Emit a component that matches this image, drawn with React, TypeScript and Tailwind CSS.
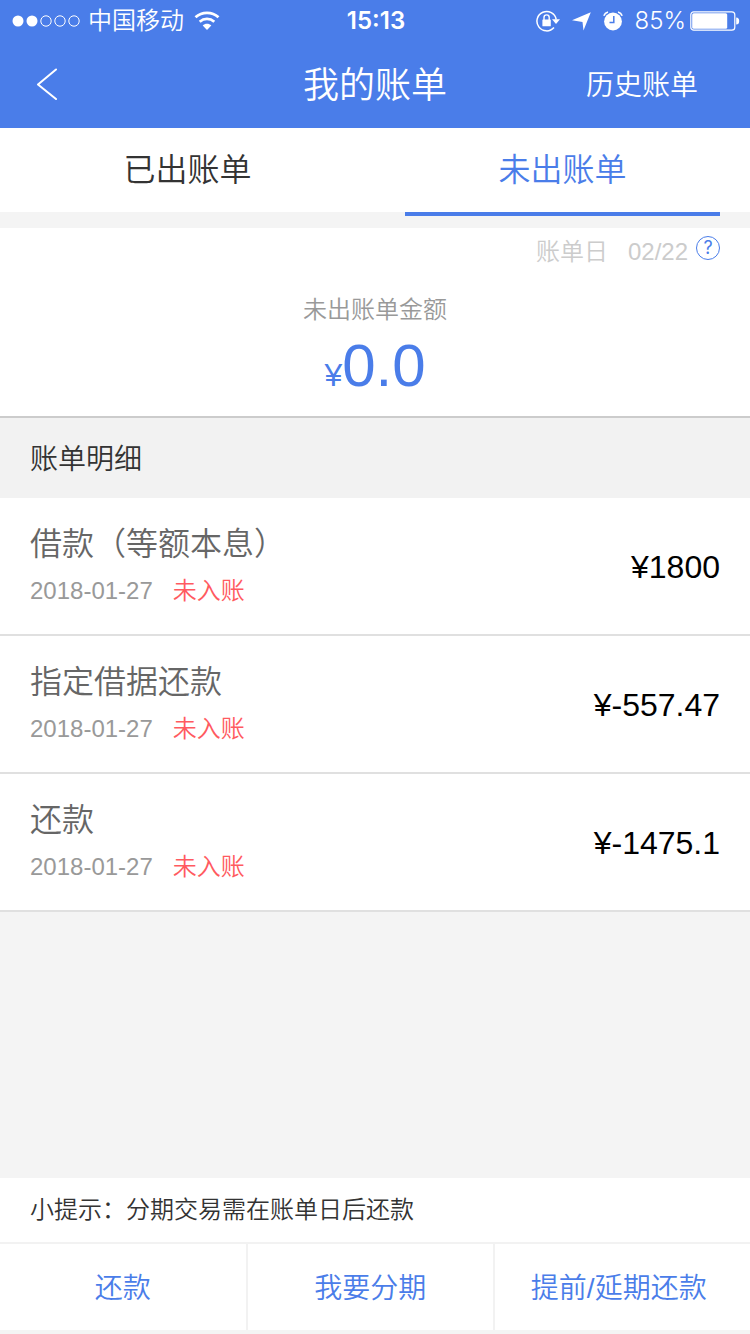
import React, { useState } from 'react';

type Bill = { id: number; title: string; date: string; status: string; amount: string };

const bills: Bill[] = [
  { id: 1, title: '借款（等额本息）', date: '2018-01-27', status: '未入账', amount: '1800' },
  { id: 2, title: '指定借据还款', date: '2018-01-27', status: '未入账', amount: '-557.47' },
  { id: 3, title: '还款', date: '2018-01-27', status: '未入账', amount: '-1475.1' },
];

const tabs = ['已出账单', '未出账单'];
const actions = ['还款', '我要分期', '提前/延期还款'];

function StatusBar() {
  return (
    <div className="flex h-10 items-center pt-0.5 pr-2.5 pl-3 text-2xl leading-9">
      <div className="flex flex-1 items-center">
        <svg width="68" height="12" viewBox="0 0 68 12" className="mr-2" aria-hidden="true">
          <circle cx="6" cy="6" r="5.5" fill="#fff" />
          <circle cx="20" cy="6" r="5.5" fill="#fff" />
          <g fill="none" stroke="#fff">
            <circle cx="34" cy="6" r="5.2" />
            <circle cx="48" cy="6" r="5.2" />
            <circle cx="62" cy="6" r="5.2" />
          </g>
        </svg>
        <span>中国移动</span>
        <svg width="26" height="20" viewBox="0 0 26 20" className="ml-2.5" aria-hidden="true">
          <g fill="none" stroke="#fff" strokeWidth="2.8">
            <path d="M1.5 6.3C8 .4 18 .4 24.5 6.3" />
            <path d="M5.7 10.7C10 7 16 7 20.3 10.7" />
          </g>
          <path d="M13 19 8.700 14.500C11 12.300 15 12.300 17.300 14.500Z" fill="#fff" />
        </svg>
      </div>
      <span className="font-['Inter',sans-serif] font-semibold">15:13</span>
      <div className="flex flex-1 items-center justify-end">
        <svg width="24" height="22" viewBox="0 0 24 22" fill="none" aria-hidden="true">
          <path d="M18 17.500A9.700 9.700 0 1 1 20.200 9.500" stroke="#fff" strokeWidth="1.500" />
          <path d="M16 9.300H24L20 14Z" fill="#fff" />
          <rect x="6.400" y="9.500" width="8.400" height="6.800" rx=".6" fill="#fff" />
          <path d="M8 10V7.500a2.600 2.600 0 0 1 5.200 0V10" stroke="#fff" strokeWidth="1.400" />
        </svg>
        <svg width="19" height="19" viewBox="0 0 19 19" className="ml-3" aria-hidden="true">
          <path d="M18.800.3 11.500 18.500 10.500 10 0 8.200Z" fill="#fff" />
        </svg>
        <svg width="20" height="20" viewBox="0 0 20 20" className="ml-3" aria-hidden="true">
          <circle cx="10" cy="10.500" r="8.900" fill="#fff" />
          <path d="M10.800 5V11.500H6.500" fill="none" stroke="#4a7de9" strokeWidth="1.500" />
          <path d="M.8 4.800A6 6 0 0 1 5 1M19.200 4.800A6 6 0 0 0 15 1" fill="none" stroke="#fff" strokeWidth="1.600" />
        </svg>
        <span className="ml-3 font-['Inter',sans-serif] font-light">85%</span>
        <svg width="50" height="20" viewBox="0 0 50 20" className="ml-1" aria-hidden="true">
          <rect x=".8" y=".8" width="44" height="18.400" rx="3" fill="none" stroke="#fff" strokeWidth="1.200" />
          <rect x="2.200" y="2.200" width="35" height="15.600" rx="1.500" fill="#fff" />
          <path d="M46.200 6.500a3 3.500 0 0 1 0 7Z" fill="#fff" />
        </svg>
      </div>
    </div>
  );
}

export default function App() {
  const [activeTab, setActiveTab] = useState('未出账单');

  return (
    <div className="flex min-h-screen flex-col bg-[#f4f4f4] font-['Liberation_Sans','Noto_Sans_CJK_SC',sans-serif] font-[350] text-[#333]">
      <header className="bg-[#4a7de9] text-white">
        <StatusBar />
        <div className="flex h-22 items-center px-[30px]">
          <div className="flex flex-1">
            <button aria-label="返回" className="py-2 pl-1">
              <svg width="28" height="32" viewBox="0 0 28 32" fill="none" stroke="#fff" strokeWidth="2" strokeLinecap="round" strokeLinejoin="round">
                <path d="M22 1.500 4 16.500 22 31" />
              </svg>
            </button>
          </div>
          <h1 className="pt-1 text-4xl leading-[84px]">我的账单</h1>
          <div className="flex flex-1 justify-end">
            <a href="#history" className="pt-1 pr-[22px] text-[28px] leading-[84px]">历史账单</a>
          </div>
        </div>
      </header>

      {/* Tabs */}
      <div role="tablist" className="mb-4 grid grid-cols-2 bg-white">
        {tabs.map(tab => (
          <button
            key={tab}
            role="tab"
            aria-selected={activeTab === tab}
            onClick={() => setActiveTab(tab)}
            className={`relative h-[84px] text-[32px] leading-[84px] ${activeTab === tab ? 'text-[#4a7de9]' : ''}`}
          >
            {tab}
            {activeTab === tab && <span className="absolute inset-x-[30px] top-full h-1 bg-[#4a7de9]" />}
          </button>
        ))}
      </div>

      {/* Summary */}
      <section className="border-b-2 border-[#ccc] bg-white pb-3 text-center">
        <div className="flex items-start justify-end px-[30px] pt-2 text-2xl leading-8 text-[#ccc]">
          <span>账单日</span>
          <span className="ml-5">02/22</span>
          <button aria-label="账单日说明" className="ml-2 h-6 w-6 rounded-full border border-[#4a7de9] font-['Inter',sans-serif] text-lg leading-[22px] font-normal text-[#4a7de9]">
            ?
          </button>
        </div>
        <p className="mt-6 text-2xl leading-9 text-[#999]">未出账单金额</p>
        <p className="text-[60px] leading-[76px] text-[#4a7de9]">
          <span className="text-[32px] leading-none">¥</span>0.0
        </p>
      </section>

      {/* Details */}
      <h2 className="bg-[#f2f2f2] px-[30px] pt-1 text-[28px] leading-[76px]">账单明细</h2>
      <ul className="bg-white">
        {bills.map(b => (
          <li key={b.id} className="flex items-center justify-between border-b-2 border-[#e0e0e0] px-[30px] pt-[22px] pb-5">
            <div>
              <p className="text-[32px] leading-[48px] text-[#666]">{b.title}</p>
              <p className="flex gap-5 text-2xl leading-[46px] text-[#999]">
                <span>{b.date}</span>
                <span className="text-[#ff5a60]">{b.status}</span>
              </p>
            </div>
            <span className="text-[32px] leading-[48px] text-black">¥{b.amount}</span>
          </li>
        ))}
      </ul>

      <footer className="mt-auto bg-white">
        <p className="border-b-2 border-[#f2f2f2] px-[30px] text-2xl leading-16">小提示：分期交易需在账单日后还款</p>
        <div className="flex border-b-4 border-[#f4f4f4]">
          {actions.map(action => (
            <button key={action} className="w-[33%] border-r-2 border-[#f2f2f2] pt-1 text-[28px] leading-[82px] text-[#4a7de9] last:border-r-0">
              {action}
            </button>
          ))}
        </div>
      </footer>
    </div>
  );
}
